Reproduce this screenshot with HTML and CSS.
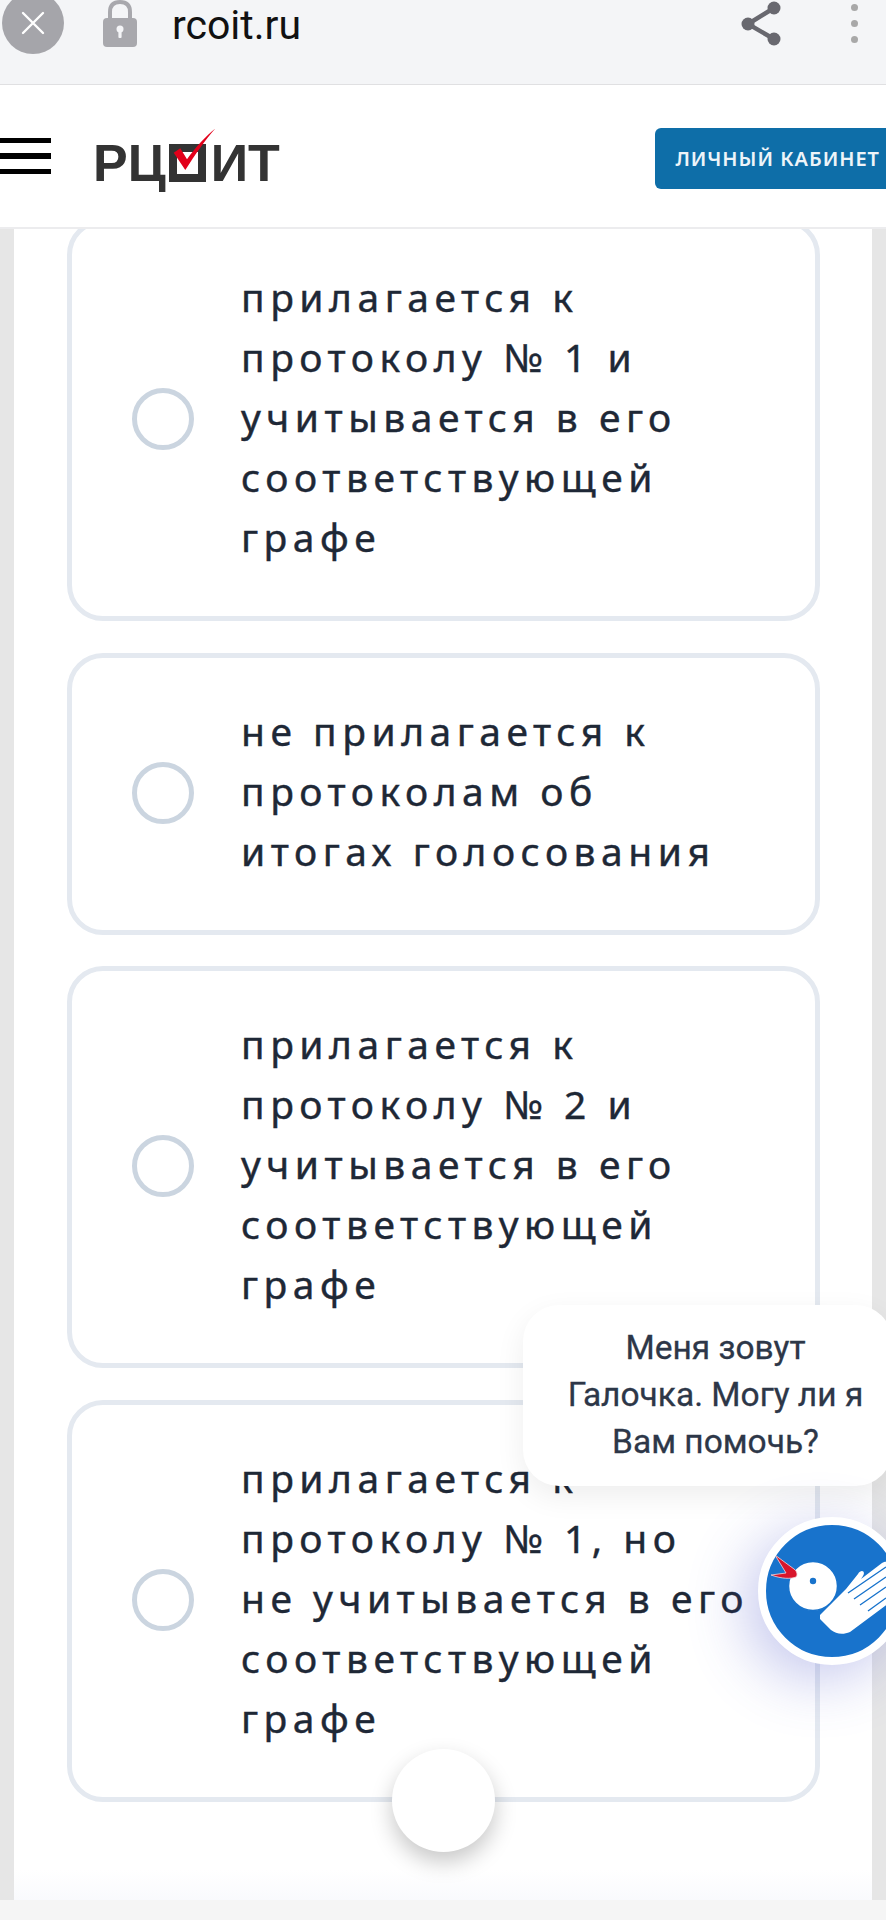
FILE: index.html
```html
<!DOCTYPE html>
<html lang="ru">
<head>
  <meta charset="UTF-8">
  <title>РЦОИТ</title>
  <meta name="viewport" content="width=device-width, initial-scale=1.0">
  <link rel="stylesheet" href="styles.css">
</head>
<body>
  <div class="browser-bar">
    <div class="close-btn">
      <svg width="26" height="26" viewBox="0 0 26 26"><path d="M3 3 L23 23 M23 3 L3 23" stroke="#fff" stroke-width="2.4" stroke-linecap="round"/></svg>
    </div>
    <svg class="lock" width="36" height="48" viewBox="0 0 36 48">
      <path d="M8 20 V12 C8 5 12 2 18 2 C24 2 28 5 28 12 V20" fill="none" stroke="#a8a8ad" stroke-width="4"/>
      <rect x="1" y="18" width="34" height="29" rx="4" fill="#a8a8ad"/>
      <circle cx="18" cy="29" r="3.5" fill="#f4f5f7"/>
      <rect x="16.4" y="30" width="3.2" height="8" rx="1" fill="#f4f5f7"/>
    </svg>
    <span class="address">rcoit.ru</span>
    <svg class="share" width="44" height="48" viewBox="0 0 44 48">
      <path d="M34 8 L8 24 L34 39" fill="none" stroke="#68686f" stroke-width="4.5"/>
      <circle cx="34" cy="8" r="6.5" fill="#68686f"/>
      <circle cx="8" cy="24" r="6.5" fill="#68686f"/>
      <circle cx="34" cy="39" r="6.5" fill="#68686f"/>
    </svg>
    <div class="dots"><i></i><i></i><i></i></div>
  </div>

  <header class="site-header">
    <div class="burger"><i></i><i></i><i></i></div>
    <div class="logo">
      <span>РЦ</span>
      <span class="logo-box">
        <svg width="52" height="56" viewBox="0 0 52 56"><path d="M8.7 24.7 L15.3 20.3 L22 31.3 C30 20 40 9 50.3 .5 C40 12 30 27 20.3 42 Z" fill="#e2001a"/></svg>
      </span>
      <span>ИТ</span>
    </div>
    <a class="cabinet-btn">ЛИЧНЫЙ КАБИНЕТ</a>
  </header>

  <main class="page">
    <div class="panel">
      <div class="answers">
        <label class="answer">
          <span class="radio"></span>
          <span class="answer-text">прилагается к<br>протоколу № 1 и<br>учитывается в его<br>соответствующей<br>графе</span>
        </label>
        <label class="answer">
          <span class="radio"></span>
          <span class="answer-text">не прилагается к<br>протоколам об<br>итогах голосования</span>
        </label>
        <label class="answer">
          <span class="radio"></span>
          <span class="answer-text">прилагается к<br>протоколу № 2 и<br>учитывается в его<br>соответствующей<br>графе</span>
        </label>
        <label class="answer">
          <span class="radio"></span>
          <span class="answer-text">прилагается к<br>протоколу № 1, но<br>не учитывается в его<br>соответствующей<br>графе</span>
        </label>
      </div>
    </div>
  </main>
  <div class="page-end"></div>

  <!-- чат-виджет поверх страницы -->
  <div class="chat-tip">Меня зовут<br>Галочка. Могу ли я<br>Вам помочь?</div>
  <div class="chat-avatar">
    <svg width="132" height="132" viewBox="8 8 132 132">
      <path d="M62 98 L88 72 L100 57 C103 52 108 54 105 59 L103 62 L124 46 C129 43 133 46 131 50 L131 86 L92 115 C85 118 78 117 73 113 L62 102 Z" fill="#fff"/>
      <path d="M90 76 L128 50 M96 82 L128 60 M102 88 L128 70 M110 94 L128 81" stroke="#1873cc" stroke-width="1.4" fill="none"/>
      <circle cx="55" cy="69" r="24.5" fill="#fff" stroke="#1873cc" stroke-width="1.5"/>
      <circle cx="55" cy="64" r="3.2" fill="#1873cc"/>
      <path d="M17 38 L36 52 C39 54 40 58 38 60 C33 62 24 62 13 58 L28 56 Z" fill="#d8152b" stroke="#f3d7dc" stroke-width=".8"/>
    </svg>
  </div>
  <div class="round-btn"></div>
</body>
</html>
```

FILE: styles.css
```css
html, body {
  height: 100%;
  overflow: hidden;
}
body {
  margin: 0;
  position: relative;
  display: flex;
  flex-direction: column;
  height: 1920px;
  background: #fff;
  font-family: "Noto Sans", sans-serif;
}
.browser-bar {
  display: flex;
  align-items: flex-start;
  height: 84px;
  flex: none;
  background: #f4f5f7;
  border-bottom: 1px solid #e0e0e2;
  overflow: hidden;
}
.close-btn {
  display: flex;
  align-items: center;
  justify-content: center;
  width: 62px;
  height: 62px;
  margin: -8px 0 0 2px;
  border-radius: 50%;
  background: #a5a5aa;
}
.lock {
  margin-left: 38px;
}
.address {
  margin-left: 34px;
  font-family: Roboto, sans-serif;
  font-size: 41px;
  line-height: 50px;
  color: #111;
}
.share {
  margin-left: auto;
  margin-right: 67px;
}
.dots {
  display: flex;
  flex-direction: column;
  gap: 9px;
  margin: 4px 28px 0 0;
}
.dots i {
  width: 7px;
  height: 7px;
  border-radius: 50%;
  background: #a8a8a8;
}
.site-header {
  display: flex;
  align-items: center;
  height: 142px;
  flex: none;
  background: #fff;
  border-bottom: 2px solid #ececee;
  position: relative;
  z-index: 2;
  margin-bottom: -1px;
}
.burger {
  display: flex;
  flex-direction: column;
  gap: 10px;
  width: 51px;
}
.burger i {
  height: 5.5px;
  background: #000;
}
.logo {
  display: flex;
  align-items: center;
  gap: 3px;
  margin: 14px 0 0 42px;
  font-family: "Liberation Sans", sans-serif;
  font-weight: 700;
  font-size: 52px;
  line-height: 52px;
  color: #333;
}
.logo-box {
  position: relative;
  width: 37px;
  height: 38px;
  box-sizing: border-box;
  border: 8px solid #333;
  margin-right: 2px;
}
.logo-box svg {
  position: absolute;
  left: -12px;
  top: -24px;
}
.cabinet-btn {
  display: flex;
  align-items: center;
  height: 61px;
  margin: 4px -6px 0 auto;
  padding: 0 12px 0 20px;
  border-radius: 6px;
  background: #0e6ea8;
  color: #edf4f9;
  font-size: 20px;
  font-weight: 600;
  letter-spacing: 1px;
  white-space: nowrap;
}
.page {
  flex: 1;
  min-height: 0;
  overflow: hidden;
  background: #e6e6e6;
  padding: 0 14px;
}
.panel {
  display: flow-root;
  height: 100%;
  padding: 0 52px 0 53px;
  background: linear-gradient(to top, #f9fafd, #fff 30px);
}
.answers {
  display: flex;
  flex-direction: column;
  gap: 31.5px;
  margin-top: -9px;
}
.answer {
  display: flex;
  align-items: center;
  gap: 47px;
  padding: 46px 0 46px 60px;
  background: #fff;
  border: 5px solid #e4e9f0;
  border-radius: 36px;
}
.radio {
  flex: none;
  width: 62px;
  height: 62px;
  margin-bottom: 2px;
  box-sizing: border-box;
  border: 5px solid #cbd5e0;
  border-radius: 50%;
}
.answer-text {
  margin: -3px 0 3px;
  font-size: 39px;
  line-height: 60px;
  letter-spacing: 5.5px;
  color: #1e2836;
  -webkit-text-stroke: .4px #1e2836;
  white-space: nowrap;
}
.page-end {
  height: 20px;
  flex: none;
  background: #f5f5f5;
}
.chat-tip {
  position: absolute;
  left: 523px;
  right: -6px;
  top: 1305px;
  height: 181px;
  box-sizing: border-box;
  padding: 19px 0 0 16px;
  border-radius: 36px;
  background: #fff;
  box-shadow: 0 10px 30px rgba(0, 0, 0, .07);
  font-family: Roboto, sans-serif;
  font-size: 33.5px;
  line-height: 47px;
  text-align: center;
  color: #2d3748;
  -webkit-text-stroke: .3px #2d3748;
}
.chat-avatar {
  position: absolute;
  left: 758px;
  top: 1517px;
  width: 132px;
  height: 132px;
  border: 8px solid #fff;
  border-radius: 50%;
  background: #1873cc;
  overflow: hidden;
  box-shadow: -12px 14px 60px rgba(70, 80, 200, .32);
}
.chat-avatar svg {
  display: block;
}
.round-btn {
  position: absolute;
  left: 392px;
  top: 1749px;
  width: 103px;
  height: 103px;
  border-radius: 50%;
  background: #fff;
  box-shadow: 0 10px 22px rgba(0, 0, 0, .22);
}
```
